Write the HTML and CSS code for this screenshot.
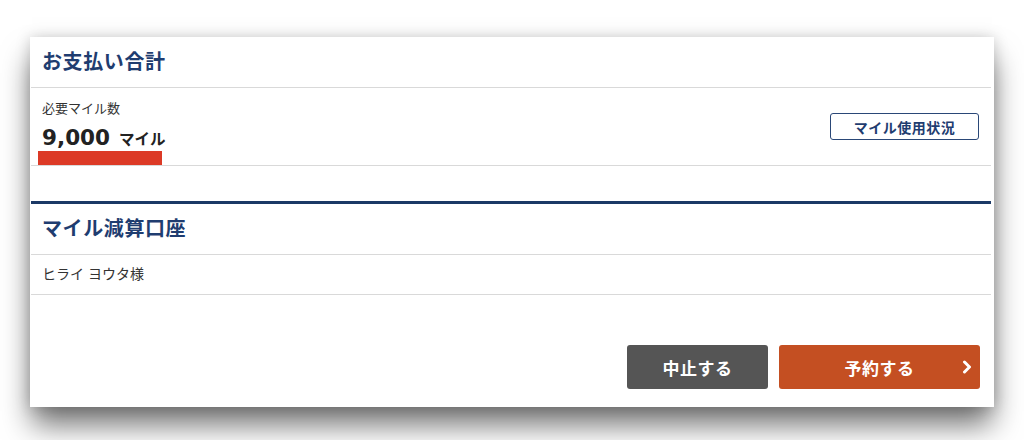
FILE: index.html
```html
<!DOCTYPE html>
<html lang="ja">
<head>
  <meta charset="UTF-8" />
  <title>お支払い合計</title>
  <link rel="stylesheet" href="styles.css">
</head>
<body>
  <div class="stage">
    <div class="panel">
      <section class="block">
        <h2 class="block-title">お支払い合計</h2>
        <div class="row miles">
          <div class="miles-info">
            <p class="label">必要マイル数</p>
            <p class="amount"><span class="num">9,000</span><span class="unit">マイル</span></p>
            <div class="mark"></div>
          </div>
          <button class="btn-outline">マイル使用状況</button>
        </div>
      </section>

      <section class="block account">
        <h2 class="block-title">マイル減算口座</h2>
        <div class="row name">ヒライ ヨウタ様</div>
      </section>

      <div class="actions">
        <button class="btn btn-cancel">中止する</button>
        <button class="btn btn-submit">予約する
          <svg class="chev" width="12" height="14" viewBox="0 0 12 14"><polyline points="3.5,2 8.5,7 3.5,12" fill="none" stroke="#fff" stroke-width="3" stroke-linecap="round" stroke-linejoin="round"/></svg>
        </button>
      </div>
    </div>
  </div>
</body>
</html>
```

FILE: styles.css
```css
* { box-sizing: border-box; margin: 0; padding: 0; }
body {
  background: #fff;
  font-family: "Liberation Sans", "Noto Sans CJK JP", sans-serif;
  color: #333;
}
.stage { min-height: 440px; padding: 37px 30px 0; }
.panel {
  width: 964px;
  height: 370px;
  background: #fff;
  padding: 0 3px 0 1px;
  display: flex;
  flex-direction: column;
  box-shadow: 0 20px 28px -2px rgba(0, 0, 0, 0.55), 0 0 14px rgba(0, 0, 0, 0.18);
}
.block-title {
  height: 51px;
  line-height: 50px;
  padding-left: 11px;
  font-size: 20px;
  letter-spacing: 0.6px;
  font-weight: bold;
  color: #1f3d70;
  border-bottom: 1px solid #d9d9d9;
}
.row { border-bottom: 1px solid #d9d9d9; }
.miles {
  height: 78px;
  display: flex;
  align-items: center;
  justify-content: space-between;
  padding: 0 12px 0 11px;
}
.miles-info { align-self: flex-end; padding-top: 12px; }
.label { height: 18px; font-size: 13px; line-height: 18px; color: #333; }
.amount {
  height: 26px;
  margin-top: 7px;
  display: flex;
  align-items: baseline;
  color: #222;
}
.num {
  font-family: "DejaVu Sans", "Liberation Sans", sans-serif;
  font-size: 21.5px;
  line-height: 26px;
  font-weight: bold;
}
.unit { font-size: 15.5px; line-height: 1; font-weight: bold; margin-left: 9px; }
.mark {
  width: 124px;
  height: 14px;
  margin-left: -4px;
  background: #dc3a26;
}
.btn-outline {
  width: 149px;
  height: 27px;
  border: 1px solid #2a4777;
  border-radius: 3px;
  background: #fff;
  color: #1f3d70;
  font-family: inherit;
  font-size: 14px;
  font-weight: bold;
  letter-spacing: 0.5px;
}
.account { margin-top: 35px; border-top: 3px solid #1b3966; }
.name {
  height: 40px;
  line-height: 38px;
  padding-left: 11px;
  font-size: 14px;
  color: #333;
}
.actions {
  margin-top: auto;
  padding: 0 11px 18px 0;
  display: flex;
  justify-content: flex-end;
  gap: 11px;
}
.btn {
  height: 44px;
  border: none;
  border-radius: 3px;
  color: #fff;
  font-family: inherit;
  font-size: 17px;
  font-weight: bold;
  letter-spacing: 0.5px;
  position: relative;
}
.btn-cancel { width: 141px; background: #555; }
.btn-submit { width: 201px; background: #c44f22; }
.chev { position: absolute; right: 7px; top: 15px; }
```
